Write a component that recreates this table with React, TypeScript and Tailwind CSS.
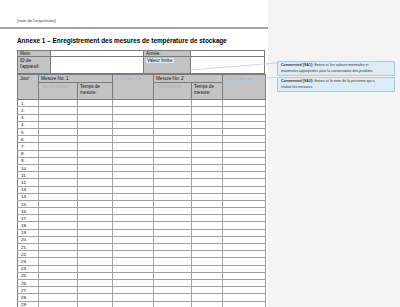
import React from 'react'

const font = { fontFamily: '"Liberation Sans", Arial, sans-serif' }

const cols = [21, 39, 35, 41, 38, 31, 43]
const days = Array.from({ length: 29 }, (_, i) => i + 1)

const grey = 'bg-[#c4c4c4]'
const line = 'border-[#7a7a7a]'

function Blurred({ children }: { children: React.ReactNode }) {
  return <span className="text-[#9fb4c8] blur-[0.7px]">{children}</span>
}

function Comment({ tag, first, second }: { tag: string; first: string; second: string }) {
  return (
    <div className="border border-[#a9cbe8] bg-[#dcebf8] rounded-[1px] px-[3px] py-[1px] text-[3.6px] leading-[5.5px] text-[#333]">
      <div className="whitespace-nowrap">
        <span className="font-bold">Commented [{tag}]:</span>
        <span> {first}</span>
      </div>
      <div className="whitespace-nowrap">{second}</div>
    </div>
  )
}

export default function App() {
  return (
    <div className="relative w-[400px] h-[307px] overflow-hidden flex bg-white text-black" style={font}>
      <div className="w-[268px] shrink-0 bg-white">
        <div className="h-[18px]" />
        <div className="pl-[17px] text-[4.2px] text-[#444]">[nom de l'organisme]</div>
        <div className="mt-[3px] h-[2px] bg-[#a6a6a6]" />
        <div className="pl-[17px] mt-[8px] text-[6.4px] font-bold text-black leading-[8px]">
          Annexe 1 – Enregistrement des mesures de température de stockage
        </div>

        <div className="ml-[17px] mt-[5px] w-[248px] text-[4.6px] leading-[5.5px] text-[#111]">
          <div className={`flex h-[7px] border ${line}`}>
            <div className={`w-[33px] ${grey} border-r ${line} pl-[2px]`}>Mois:</div>
            <div className={`w-[93px] border-r ${line}`} />
            <div className={`w-[47px] ${grey} border-r ${line} pl-[2px]`}>Année:</div>
            <div className="flex-1" />
          </div>
          <div className={`flex h-[17px] border-x border-b ${line}`}>
            <div className={`w-[33px] ${grey} border-r ${line} pl-[2px] pt-[1px]`}>ID de<br />l'appareil:</div>
            <div className={`w-[93px] border-r ${line}`} />
            <div className={`w-[47px] ${grey} border-r ${line} pl-[2px] pt-[1px]`}>
              <span className="bg-[#dcebf8] px-[1px]">Valeur limite:</span>
            </div>
            <div className="flex-1" />
          </div>

          <table className={`border-collapse table-fixed w-[248px] border ${line}`}>
            <colgroup>
              {cols.map((w, i) => <col key={i} style={{ width: w }} />)}
            </colgroup>
            <thead>
              <tr className="h-[8px]">
                <td rowSpan={2} className={`${grey} border ${line} align-top pl-[2px] pt-[1px]`}>Jour</td>
                <td colSpan={2} className={`${grey} border ${line} align-top pl-[2px] pt-[1px]`}>Mesure No. 1</td>
                <td rowSpan={2} className={`${grey} border ${line} align-top pl-[2px] pt-[1px]`}><Blurred>Contrôlée par</Blurred></td>
                <td colSpan={2} className={`${grey} border ${line} align-top pl-[2px] pt-[1px]`}>Mesure No. 2</td>
                <td rowSpan={2} className={`${grey} border ${line} align-top pl-[2px] pt-[1px]`}><Blurred>Contrôlée par</Blurred></td>
              </tr>
              <tr className="h-[17px]">
                <td className={`${grey} border ${line} align-top pl-[3px] pt-[1px]`}><Blurred>Température</Blurred></td>
                <td className={`${grey} border ${line} align-top pl-[2px] pt-[1px]`}>Temps de<br />mesure:</td>
                <td className={`${grey} border ${line} align-top pl-[3px] pt-[1px]`}><Blurred>Température</Blurred></td>
                <td className={`${grey} border ${line} align-top pl-[2px] pt-[1px]`}>Temps de<br />mesure:</td>
              </tr>
            </thead>
            <tbody>
              {days.map(d => (
                <tr key={d} className="h-[7.2px]">
                  <td className={`border-y border-[#a0a0a0] border-r ${line} pl-[3px] text-[4.4px] leading-[5px] text-black`}>{d}.</td>
                  {cols.slice(1).map((_, i) => (
                    <td key={i} className={`border-y border-[#a0a0a0] border-r ${line}`} />
                  ))}
                </tr>
              ))}
            </tbody>
          </table>
        </div>
      </div>

      <div className="flex-1 bg-[#f3f3f3] pt-[61px] pl-[9px] pr-[5px] flex flex-col gap-[1px]">
        <Comment tag="SA1" first="Entrez ici les valeurs minimales et" second="maximales appropriées pour la conservation des produits." />
        <Comment tag="SA2" first="Entrez ici le nom de la personne qui a" second="réalisé les mesures." />
      </div>

      <svg className="absolute inset-0 pointer-events-none" width="400" height="307">
        <line x1="190" y1="70" x2="277" y2="63" stroke="#a9cbe8" strokeWidth="0.7" />
        <line x1="225" y1="83" x2="277" y2="77" stroke="#a9cbe8" strokeWidth="0.7" />
      </svg>
    </div>
  )
}
